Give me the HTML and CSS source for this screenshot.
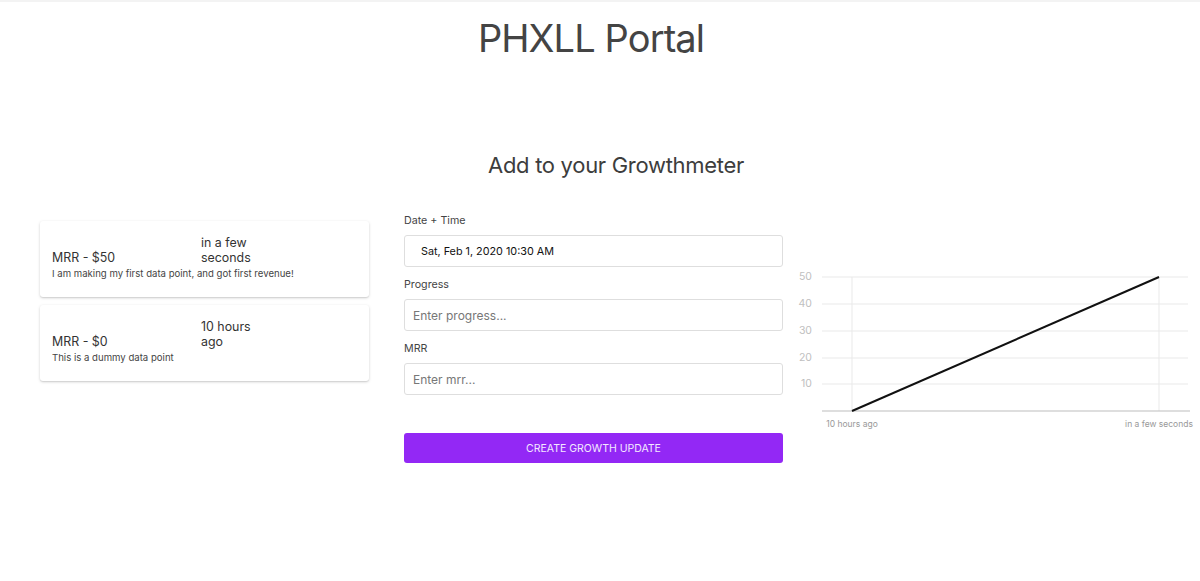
FILE: index.html
```html
<!DOCTYPE html>
<html lang="en">
<head>
<meta charset="utf-8">
<title>PHXLL Portal</title>
<link rel="stylesheet" href="styles.css">
</head>
<body>
<div class="topbar"></div>
<header class="header">
  <h1 class="title">PHXLL Portal</h1>
</header>
<main class="main">
  <h2 class="subtitle">Add to your Growthmeter</h2>
  <div class="columns">
    <section class="cards">
      <article class="card">
        <div class="card-row">
          <div class="card-mrr">MRR - $50</div>
          <div class="card-time">in a few seconds</div>
        </div>
        <p class="card-desc">I am making my first data point, and got first revenue!</p>
      </article>
      <article class="card">
        <div class="card-row">
          <div class="card-mrr">MRR - $0</div>
          <div class="card-time">10 hours ago</div>
        </div>
        <p class="card-desc">This is a dummy data point</p>
      </article>
    </section>
    <form class="form">
      <label class="field-label">Date + Time</label>
      <div class="input input-date">Sat, Feb 1, 2020 10:30 AM</div>
      <label class="field-label">Progress</label>
      <input class="input" type="text" placeholder="Enter progress...">
      <label class="field-label">MRR</label>
      <input class="input" type="text" placeholder="Enter mrr...">
      <button class="btn" type="button">CREATE GROWTH UPDATE</button>
    </form>
    <section class="chart">
      <svg class="chart-svg" width="410" height="175" viewBox="0 0 410 175">
        <g class="grid">
          <line x1="32" y1="12" x2="398" y2="12"/>
          <line x1="32" y1="39" x2="398" y2="39"/>
          <line x1="32" y1="66" x2="398" y2="66"/>
          <line x1="32" y1="93" x2="398" y2="93"/>
          <line x1="32" y1="119" x2="398" y2="119"/>
          <line x1="62" y1="12" x2="62" y2="146"/>
          <line x1="369" y1="12" x2="369" y2="146"/>
        </g>
        <line class="axis" x1="32" y1="146" x2="400" y2="146"/>
        <g class="ylabels">
          <text x="22" y="12">50</text>
          <text x="22" y="39">40</text>
          <text x="22" y="66">30</text>
          <text x="22" y="93">20</text>
          <text x="22" y="119">10</text>
        </g>
        <line class="series" x1="62" y1="146" x2="369" y2="12"/>
        <g class="xlabels">
          <text x="62" y="160">10 hours ago</text>
          <text x="369" y="160">in a few seconds</text>
        </g>
      </svg>
    </section>
  </div>
</main>
</body>
</html>
```
FILE: styles.css
```css
* { box-sizing: border-box; }
html, body {
  margin: 0;
  padding: 0;
  background: #fff;
  font-family: "Inter", "Noto Sans", sans-serif;
  color: #444;
}
.topbar {
  height: 2px;
  background: #f3f3f3;
}
.header {
  text-align: center;
  padding-top: 12px;
  padding-right: 18px;
}
.title {
  margin: 0;
  font-size: 38px;
  line-height: 48px;
  font-weight: 400;
  color: #444;
  letter-spacing: -0.9px;
}
.main {
  padding-top: 89px;
}
.subtitle {
  margin: 0;
  padding-left: 32px;
  text-align: center;
  font-size: 22px;
  line-height: 28px;
  font-weight: 400;
  color: #3d3d3d;
  letter-spacing: -0.3px;
}
.columns {
  display: flex;
  align-items: flex-start;
  margin-top: 33px;
}
.cards {
  width: 329px;
  margin-left: 40px;
  margin-top: 9px;
  display: flex;
  flex-direction: column;
  gap: 8px;
}
.card {
  background: #fff;
  border-radius: 3px;
  box-shadow: 0 1px 3px rgba(0,0,0,0.18), 0 1px 1px rgba(0,0,0,0.06);
  padding: 14px 12px 16px;
}
.card-row {
  display: flex;
  align-items: flex-end;
}
.card-mrr {
  width: 149px;
  font-size: 12.4px;
  line-height: 15px;
  color: #333;
}
.card-time {
  width: 62px;
  font-size: 12.4px;
  line-height: 15px;
  color: #333;
}
.card-desc {
  margin: 2px 0 0;
  font-size: 9.6px;
  line-height: 14px;
  color: #444;
}
.form {
  width: 379px;
  margin-left: 35px;
  display: flex;
  flex-direction: column;
}
.field-label {
  font-size: 10.7px;
  line-height: 14px;
  color: #444;
  margin-top: 2px;
  margin-bottom: 7px;
}
.input {
  width: 100%;
  height: 32px;
  border: 1px solid #dedede;
  border-radius: 3px;
  padding: 0 8px;
  font-family: "Inter", "Noto Sans", sans-serif;
  font-size: 12px;
  color: #333;
  background: #fff;
  margin-bottom: 9px;
  outline: none;
}
.input::placeholder {
  color: #777;
}
.input-date {
  display: flex;
  align-items: center;
  padding-left: 16px;
  font-size: 10.8px;
  color: #111;
}
.btn {
  margin-top: 29px;
  height: 30px;
  border: none;
  border-radius: 3px;
  background: #9328f5;
  color: #f4e8ff;
  font-family: "Inter", "Noto Sans", sans-serif;
  font-size: 10.5px;
  letter-spacing: 0;
}
.chart {
  margin-left: 7px;
  margin-top: 53px;
}
.chart-svg {
  display: block;
}
.grid line {
  stroke: #e9e9e9;
  stroke-width: 1;
}
.axis {
  stroke: #bdbdbd;
  stroke-width: 1.2;
}
.series {
  stroke: #111;
  stroke-width: 2;
}
.ylabels text {
  font-family: "Inter", "Noto Sans", sans-serif;
  font-size: 10.5px;
  fill: #c0c0c0;
  text-anchor: end;
  dominant-baseline: middle;
}
.xlabels text {
  font-family: "Inter", "Noto Sans", sans-serif;
  font-size: 8.5px;
  fill: #999;
  text-anchor: middle;
  dominant-baseline: middle;
}
```
